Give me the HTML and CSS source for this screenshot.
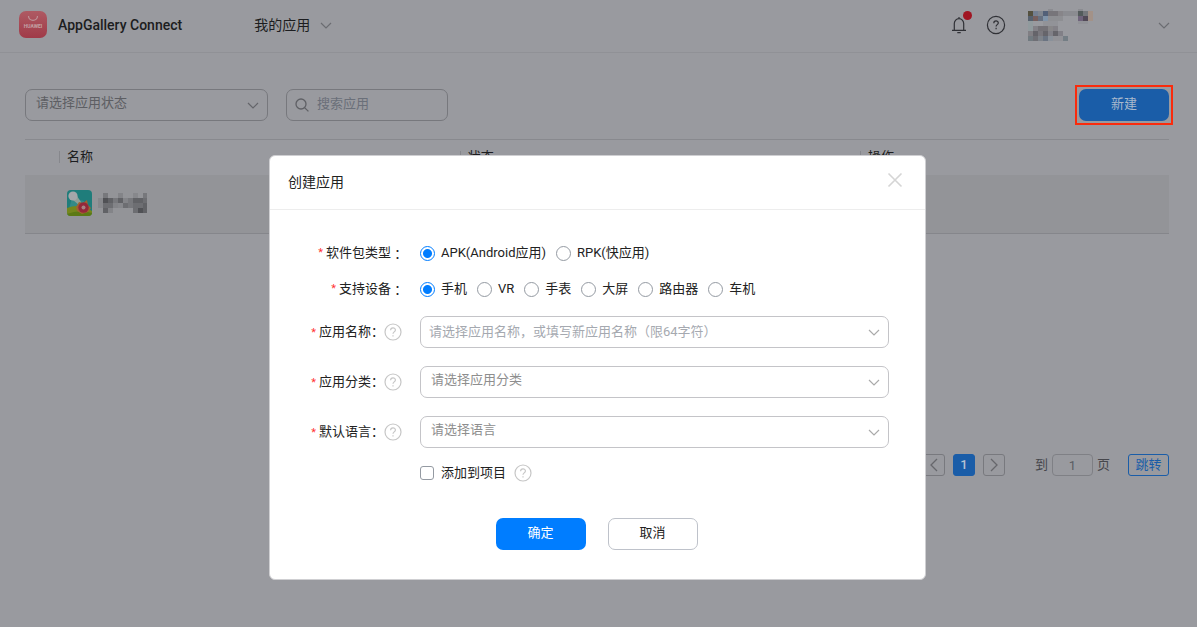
FILE: index.html
```html
<!DOCTYPE html>
<html lang="zh-CN">
<head>
<meta charset="utf-8">
<meta name="viewport" content="width=device-width, initial-scale=1">
<title>AppGallery Connect</title>
<link rel="stylesheet" href="styles.css">
</head>
<body>
<header class="topbar">
  <svg class="logo" viewBox="0 0 28 28" aria-hidden="true">
    <defs><linearGradient id="lg" x1="0" y1="0" x2="0" y2="1"><stop offset="0" stop-color="#ae5a63"/><stop offset="1" stop-color="#a03a48"/></linearGradient></defs>
    <rect width="28" height="27" rx="7" fill="url(#lg)"/>
    <path d="M9.5 5a4.5 4.3 0 0 0 9 0" fill="none" stroke="#bd9297" stroke-width="1.2"/>
    <text x="14" y="17.4" text-anchor="middle" class="logo-text">HUAWEI</text>
  </svg>
  <h1 class="brand">AppGallery Connect</h1>
  <button class="nav-menu" type="button">我的应用
    <svg class="chev" viewBox="0 0 12 7" aria-hidden="true"><path d="M1 1l5 5 5-5"/></svg>
  </button>
  <div class="tools">
    <button class="icon-btn bell" type="button" aria-label="通知">
      <svg width="16" height="18" viewBox="0 0 16 18" fill="none" stroke="#303136" stroke-width="1.2"><path d="M3.3 14V7.6a4.7 5 0 0 1 9.4 0V14M1 14.3h14M8 2.6V1M6.3 16.6h3.4"/></svg>
      <span class="dot"></span>
    </button>
    <button class="icon-btn" type="button" aria-label="帮助">
      <svg width="20" height="20" viewBox="0 0 20 20" fill="none" stroke="#303136" stroke-width="1.2"><circle cx="10" cy="10" r="8.6"/><path d="M7.8 8.2c0-3 4.5-2.9 4.5-.2 0 1.6-2.2 1.7-2.2 3.4M10.1 12.8v1.4"/></svg>
    </button>
    <button class="account" type="button" aria-label="账号">
      <svg width="66" height="32" viewBox="0 0 66 32" shape-rendering="crispEdges" aria-hidden="true">
        <g fill="#8b8c91"><path d="M20 0h5v2h-5zM50 0h5v2h-5zM35 2h5v5h-5zM40 2h10v5H40z"/></g>
        <path fill="#55513f" d="M0 2h5v5H0z"/><path fill="#747f91" d="M5 2h5v5H5z"/><path fill="#80868f" d="M10 2h5v5h-5z"/><path fill="#526078" d="M15 2h5v5h-5z"/><path fill="#77757a" d="M20 2h10v5H20z"/><path fill="#878589" d="M30 2h5v5h-5z"/>
        <path fill="#535b5b" d="M50 2h5v5h-5z"/><path fill="#74777b" d="M55 2h5v5h-5z"/><path fill="#a39288" d="M60 2h5v10h-5z"/>
        <path fill="#57616e" d="M0 7h5v5H0z"/><path fill="#765f5e" d="M5 7h5v5H5z"/><path fill="#667080" d="M10 7h5v5h-5z"/><path fill="#8094a9" d="M15 7h5v5h-5z"/><path fill="#8e8f93" d="M20 7h15v5H20z"/><path fill="#6f637b" d="M50 7h5v5h-5z"/><path fill="#514957" d="M55 7h5v5h-5z"/>
        <path fill="#919b9e" d="M0 12h5v10H0z"/><path fill="#929398" d="M15 12h15v5H15zM50 12h10v3H50z"/>
        <path fill="#838187" d="M5 17h5v5H5zM25 17h5v5h-5z"/><path fill="#747277" d="M10 17h10v5H10z"/><path fill="#888789" d="M20 17h5v5h-5z"/>
        <path fill="#817f84" d="M0 22h5v5H0z"/><path fill="#65646a" d="M5 22h5v5H5z"/><path fill="#79777d" d="M10 22h5v5h-5z"/><path fill="#66656b" d="M15 22h5v5h-5zM25 22h5v5h-5z"/><path fill="#818087" d="M20 22h5v5h-5zM30 22h5v5h-5z"/>
        <path fill="#717a80" d="M0 27h5v5H0z"/><path fill="#6f6f75" d="M5 27h5v5H5z"/><path fill="#7e838a" d="M10 27h5v5h-5z"/><path fill="#6b7482" d="M15 27h5v5h-5z"/><path fill="#8a919a" d="M20 27h5v5h-5z"/><path fill="#929297" d="M25 27h10v5H25z"/><path fill="#747e85" d="M35 27h5v5h-5z"/>
      </svg>
      <svg class="chev" viewBox="0 0 12 7" aria-hidden="true"><path d="M1 1l5 5 5-5"/></svg>
    </button>
  </div>
</header>

<main class="page">
  <div class="filters">
    <div class="field field-status">
      <select class="box muted" aria-label="应用状态"><option>请选择应用状态</option></select>
      <svg class="chev" viewBox="0 0 12 7" aria-hidden="true"><path d="M1 1l5 5 5-5"/></svg>
    </div>
    <label class="box muted search">
      <svg width="14" height="14" viewBox="0 0 14 14" fill="none" stroke="#5f6065" stroke-width="1.3" aria-hidden="true"><circle cx="6" cy="6" r="5"/><path d="M9.6 9.6l3.8 3.8"/></svg>
      <input type="search" placeholder="搜索应用" aria-label="搜索应用">
    </label>
    <div class="highlight"><button class="btn create" type="button">新建</button></div>
  </div>

  <table class="apps">
    <thead><tr><th class="c-name"><span>名称</span></th><th class="c-state"><span>状态</span></th><th class="c-op"><span>操作</span></th></tr></thead>
    <tbody><tr>
      <td>
        <div class="app">
          <svg width="25" height="26" viewBox="0 0 25 26" aria-hidden="true">
            <defs><clipPath id="ic"><rect width="25" height="26" rx="4"/></clipPath></defs>
            <g clip-path="url(#ic)"><path fill="#1f7d7b" d="M0 0h25v26H0z"/><path fill="#338a88" d="M5 8l12 3 3 15H0z"/><path fill="#75871d" d="M0 18q13-5 25 3v5H0z"/><path fill="#5c7914" d="M0 24q12-5 25-1v3H0z"/><path fill="#8f9f98" d="M6 10l4-4 4 6-2 3z"/><circle cx="6" cy="6" r="4.6" fill="#a5a7aa"/><path fill="#a06330" d="M9 17l3-5 4 1 4-3 1 5 3 3-3 4-6 2-5-3z"/><circle cx="16.5" cy="17.5" r="5.2" fill="#95283a"/><circle cx="16.5" cy="17.5" r="2" fill="#a78282"/></g>
          </svg>
          <svg width="50" height="20" viewBox="0 0 50 20" shape-rendering="crispEdges" role="img" aria-label="应用">
            <path fill="#87888c" d="M0 5h5v10H0zM35 0h5v5h-5zM20 10h5v5h-5z"/><path fill="#77787c" d="M5 0h5v5H5zM15 5h5v5h-5zM30 5h5v10h-5zM45 0h4v5h-4z"/><path fill="#505155" d="M5 5h5v5H5zM40 15h5v5h-5z"/><path fill="#616266" d="M10 5h5v5h-5zM5 15h5v5H5zM20 5h5v5h-5zM35 5h10v5H35zM45 10h4v10h-4z"/><path fill="#6d6e72" d="M5 10h10v5H5zM25 10h5v5h-5zM35 10h10v5H35zM45 5h4v5h-4zM35 15h5v5h-5z"/><path fill="#838488" d="M10 15h5v5h-5zM15 10h5v5h-5zM25 5h5v5h-5zM20 0h5v5h-5z"/>
          </svg>
        </div>
      </td><td></td><td></td>
    </tr></tbody>
  </table>

  <nav class="pager" aria-label="分页">
    <button class="pg" type="button" aria-label="上一页"><svg width="8" height="14" viewBox="0 0 8 14"><path d="M7 1L1 7l6 6"/></svg></button>
    <button class="pg current" type="button">1</button>
    <button class="pg" type="button" aria-label="下一页"><svg width="8" height="14" viewBox="0 0 8 14"><path d="M1 1l6 6-6 6"/></svg></button>
    <label class="goto">到<input type="text" value="1">页</label>
    <button class="pg jump" type="button">跳转</button>
  </nav>
</main>

<div class="overlay">
  <section class="dialog" role="dialog" aria-modal="true" aria-labelledby="dlg-title">
    <div class="dialog-head">
      <h2 id="dlg-title">创建应用</h2>
      <button class="close" type="button" aria-label="关闭"><svg width="16" height="16" viewBox="0 0 16 16"><path d="M1.5 1.5l13 13M14.5 1.5l-13 13"/></svg></button>
    </div>
    <form class="form">
      <div class="row radios-row">
        <div class="lab"><i>*</i>软件包类型<span class="colon">：</span></div>
        <div class="radios">
          <label><input type="radio" name="pkg" checked>APK(Android应用)</label>
          <label><input type="radio" name="pkg">RPK(快应用)</label>
        </div>
      </div>
      <div class="row radios-row">
        <div class="lab"><i>*</i>支持设备<span class="colon">：</span></div>
        <div class="radios">
          <label><input type="radio" name="dev" checked>手机</label>
          <label><input type="radio" name="dev">VR</label>
          <label><input type="radio" name="dev">手表</label>
          <label><input type="radio" name="dev">大屏</label>
          <label><input type="radio" name="dev">路由器</label>
          <label><input type="radio" name="dev">车机</label>
        </div>
      </div>
      <div class="row field-row">
        <div class="lab"><label for="name"><i>*</i>应用名称<span class="colon">：</span></label><svg class="help" viewBox="0 0 18 18"><circle cx="9" cy="9" r="8"/><path d="M6.6 7.2c0-3.2 4.8-3 4.8-.2 0 1.8-2.4 2-2.4 3.8M9 12.2v1.4"/></svg></div>
        <div class="field"><input class="box" id="name" type="text" placeholder="请选择应用名称，或填写新应用名称（限64字符）"><svg class="chev" viewBox="0 0 12 7" aria-hidden="true"><path d="M1 1l5 5 5-5"/></svg></div>
      </div>
      <div class="row field-row">
        <div class="lab"><label for="cat"><i>*</i>应用分类<span class="colon">：</span></label><svg class="help" viewBox="0 0 18 18"><circle cx="9" cy="9" r="8"/><path d="M6.6 7.2c0-3.2 4.8-3 4.8-.2 0 1.8-2.4 2-2.4 3.8M9 12.2v1.4"/></svg></div>
        <div class="field"><select class="box" id="cat"><option>请选择应用分类</option></select><svg class="chev" viewBox="0 0 12 7" aria-hidden="true"><path d="M1 1l5 5 5-5"/></svg></div>
      </div>
      <div class="row field-row">
        <div class="lab"><label for="lang"><i>*</i>默认语言<span class="colon">：</span></label><svg class="help" viewBox="0 0 18 18"><circle cx="9" cy="9" r="8"/><path d="M6.6 7.2c0-3.2 4.8-3 4.8-.2 0 1.8-2.4 2-2.4 3.8M9 12.2v1.4"/></svg></div>
        <div class="field"><select class="box" id="lang"><option>请选择语言</option></select><svg class="chev" viewBox="0 0 12 7" aria-hidden="true"><path d="M1 1l5 5 5-5"/></svg></div>
      </div>
      <div class="row check-row">
        <div></div>
        <div class="check"><label><input type="checkbox">添加到项目</label><svg class="help" viewBox="0 0 18 18"><circle cx="9" cy="9" r="8"/><path d="M6.6 7.2c0-3.2 4.8-3 4.8-.2 0 1.8-2.4 2-2.4 3.8M9 12.2v1.4"/></svg></div>
      </div>
      <div class="actions">
        <button class="btn primary" type="submit">确定</button>
        <button class="btn plain" type="button">取消</button>
      </div>
    </form>
  </section>
</div>
</body>
</html>
```
FILE: styles.css
```css
* { box-sizing: border-box; }
body {
  margin: 0;
  min-height: 100vh;
  background: #999a9f;
  color: #1c1d20;
  font: 13px/20px Roboto, "Noto Sans CJK SC", sans-serif;
}
button, input, select { font: inherit; color: inherit; margin: 0; }
button { padding: 0; border: 0; background: none; }
.chev { width: 12px; height: 7px; flex: none; fill: none; stroke: #6b6c71; stroke-width: 1.2; }

/* Top bar */
.topbar {
  display: flex;
  align-items: center;
  height: 53px;
  padding: 0 27px 2px 19px;
  border-bottom: 1px solid #909196;
}
.logo { width: 28px; height: 28px; }
.logo-text { font: 700 5px Roboto, sans-serif; fill: #c3a2a6; }
.brand { margin: 0 0 0 11px; font-size: 14px; font-weight: 500; color: #1c1d20; }
.nav-menu { display: flex; align-items: center; gap: 10px; margin-left: 72px; font-size: 14px; }
.tools { display: flex; align-items: center; margin-left: auto; }
.icon-btn { display: flex; position: relative; margin-right: 19px; }
.dot { position: absolute; top: -5px; right: -5px; width: 9px; height: 9px; border-radius: 50%; background: #a01522; }
.account { display: flex; align-items: center; gap: 64px; margin-left: 3px; }

/* Filters */
.page { padding: 32px 28px 0 25px; }
.filters { display: flex; align-items: center; }
.field { position: relative; flex: 1; }
.field .chev { position: absolute; right: 9px; top: 13px; stroke: #aaa; }
.box {
  width: 100%;
  height: 32px;
  padding: 0 32px 2px 8px;
  border: 1px solid #c4c4c8;
  border-radius: 7px;
  background: none;
  appearance: none;
  outline: 0;
}
select.box { padding: 0 32px 5px 10px; color: #8e8e8e; }
.box::placeholder { color: #a5a9b0; opacity: 1; }
.box.muted { border-color: #77787d; color: #5d5e63; }
.field-status { flex: 0 1 243px; margin-right: 18px; }
.field-status .chev { stroke: #64656a; }
.search { display: flex; align-items: center; gap: 8px; flex: 0 1 162px; width: auto; padding: 0 8px; }
.search svg { flex: none; }
.search input { width: 100%; min-width: 0; padding: 0 0 2px; border: 0; background: none; outline: 0; appearance: none; }
.search input::placeholder { color: #6a6f79; opacity: 1; }
.highlight { margin: 0 -4px 0 auto; padding: 2px; border: 2px solid #fa2b0c; }
.btn { width: 90px; height: 32px; padding-bottom: 3px; border-radius: 7px; }
.create { display: block; background: #1a5da8; color: #a9b9cc; }

/* Table */
.apps { width: 100%; margin-top: 14px; border-collapse: collapse; table-layout: fixed; border-top: 1px solid #88898e; }
.apps th { height: 35px; padding: 0 0 1px; font-weight: 400; text-align: left; }
.apps th span { display: block; height: 12px; padding-left: 7px; border-left: 1px solid #86878c; line-height: 12px; }
.c-name { width: 38%; }
.c-state { width: 35%; }
.apps th.c-name { padding-left: 34px; }
.apps td { height: 59px; padding: 0 0 2px; background: #939498; border-bottom: 1px solid #85868b; }
.app { display: flex; align-items: center; gap: 6px; padding-left: 42px; }

/* Pager */
.pager { display: flex; justify-content: flex-end; align-items: center; margin-top: 220px; color: #46474c; }
.pg { display: flex; align-items: center; justify-content: center; width: 22px; height: 22px; margin-right: 8px; border: 1px solid #78797e; border-radius: 3px; }
.pg svg { fill: none; stroke: #66676c; stroke-width: 1.3; }
.pg.current { border-color: #1a5da8; background: #1a5da8; color: #b5c3d3; font-weight: 500; }
.goto { display: flex; align-items: center; gap: 4px; margin: 0 18px 0 22px; }
.goto input { width: 41px; height: 22px; border: 1px solid #7f8085; border-radius: 4px; background: none; text-align: center; color: #5b5d63; }
.pg.jump { width: 41px; margin: 0; border-color: #1a5da8; color: #1a5da8; }

/* Dialog */
.overlay { position: absolute; inset: 0; display: flex; align-items: flex-start; justify-content: center; padding: 155px 18px 0 16px; }
.dialog { width: 100%; max-width: 657px; border: 1px solid #cfcfd2; border-radius: 6px; background: #fff; color: #222; }
.dialog-head { display: flex; justify-content: space-between; height: 54px; padding: 16px 22px 0 18px; border-bottom: 1px solid #ededed; }
.dialog-head h2 { margin: 0; font-size: 14px; font-weight: 400; }
.close { display: flex; align-items: flex-start; height: 16px; }
.close svg { fill: none; stroke: #d5d5d5; stroke-width: 1.6; }
.form { padding: 33px 36px 29px 0; }
.row { display: grid; grid-template-columns: 134px 1fr; column-gap: 16px; }
.lab { display: flex; align-items: center; justify-content: flex-end; white-space: nowrap; }
.lab i { margin-right: 3px; color: #f33; font-size: 11px; font-style: normal; }
.colon { font-family: "Noto Sans CJK TC", sans-serif; line-height: 1; }
.help { width: 18px; height: 18px; flex: none; fill: none; stroke: #c6c6c6; stroke-width: 1.2; }
.radios-row { min-height: 36px; align-items: start; }
.radios { display: flex; flex-wrap: wrap; column-gap: 10px; }
.radios label, .check label { display: flex; align-items: center; gap: 6px; }
.radios input, .check input {
  width: 15px;
  height: 15px;
  border: 1px solid #949aa2;
  border-radius: 50%;
  background: #fff;
  appearance: none;
}
.radios input:checked { border-color: #007dff; background: radial-gradient(circle, #007dff 4px, #fff 5px); }
.check input { width: 14px; height: 14px; margin-right: 1px; border-radius: 3px; }
.field-row { margin-bottom: 18px; }
.field-row .lab { padding-right: 2px; }
.radios-row + .field-row { margin-top: 1px; }
.check-row { margin-top: -3px; }
.check { display: flex; align-items: center; gap: 8px; }
.actions { display: flex; justify-content: center; gap: 22px; margin: 35px 0 0 34px; }
.primary { background: #007dff; color: #fff; }
.plain { border: 1px solid #bec2ca; }
```
